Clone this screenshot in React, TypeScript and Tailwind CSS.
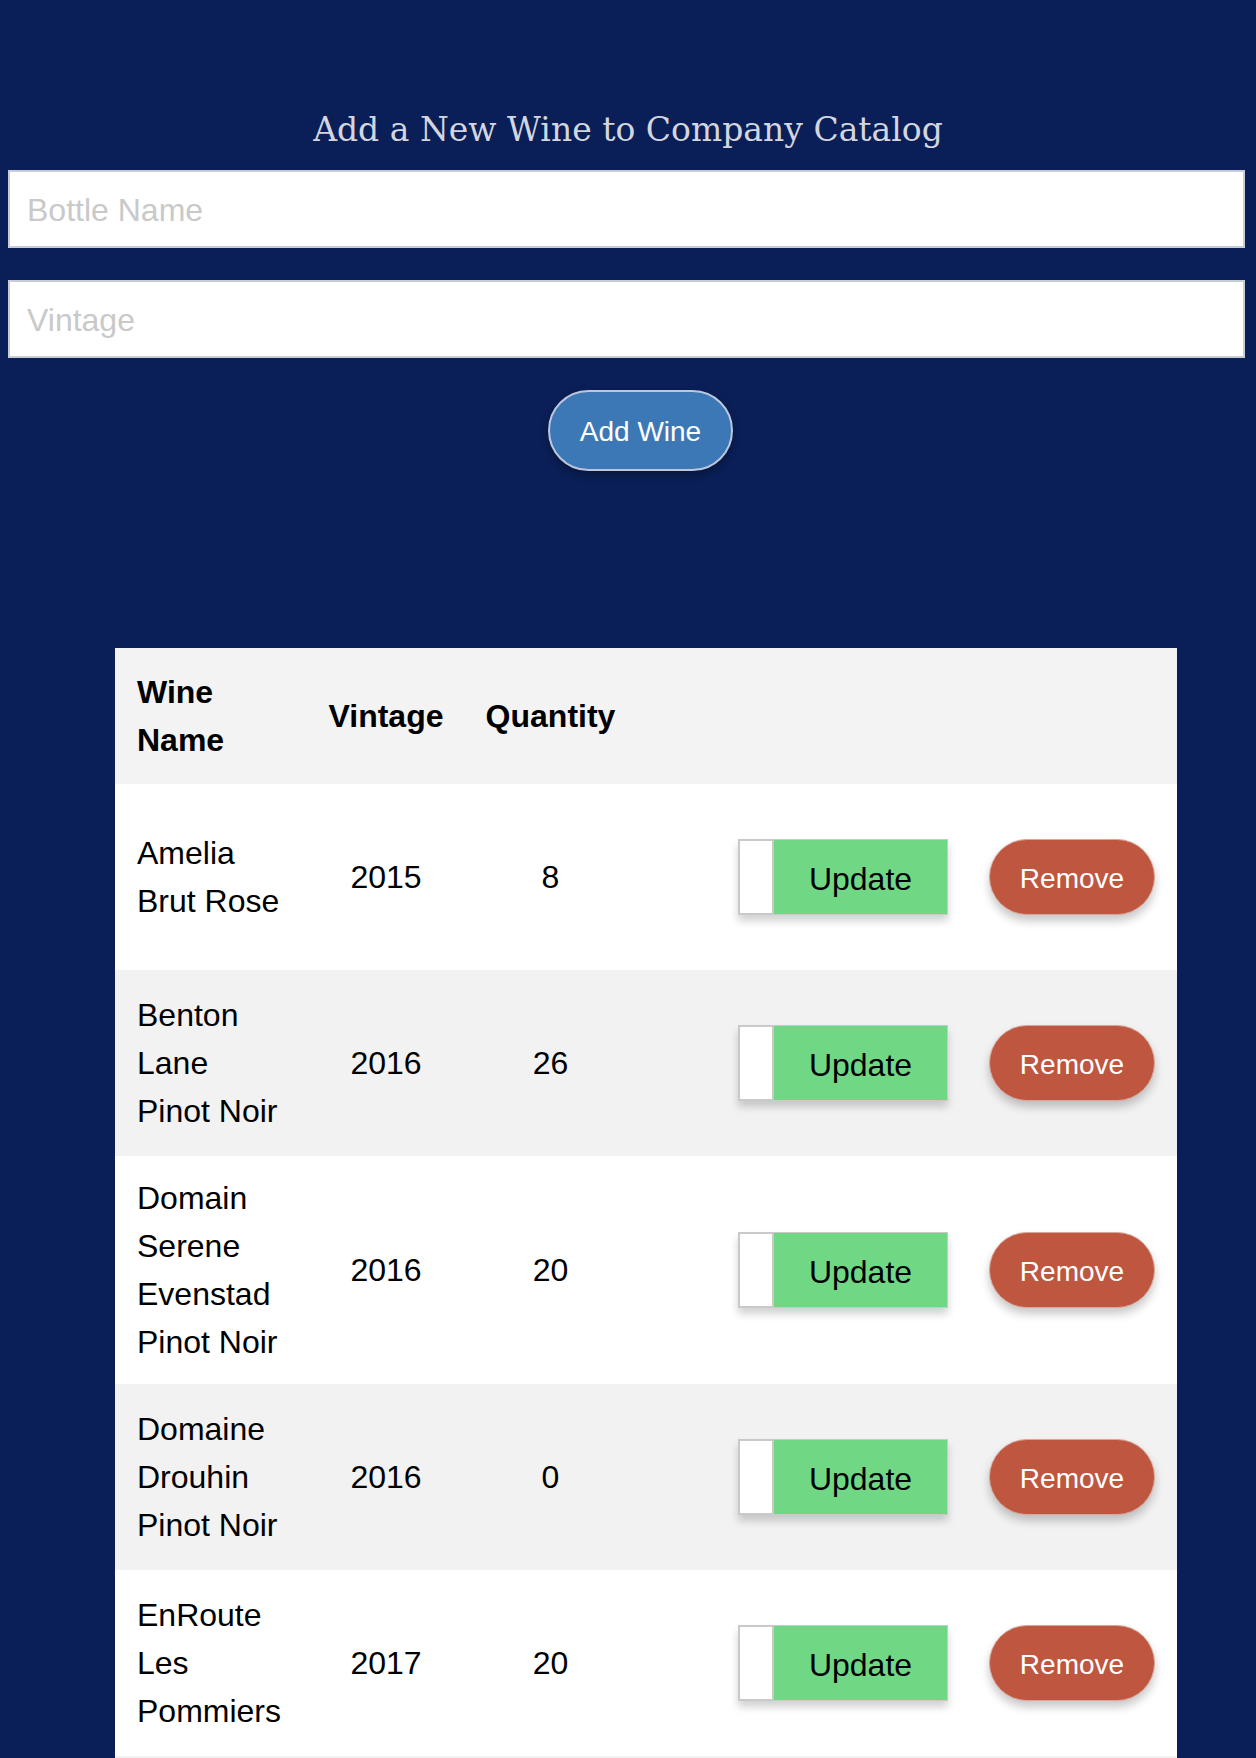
import React from "react";

type Wine = { name: string; vintage: number; qty: number };

const wines: Wine[] = [
  { name: "Amelia Brut Rose", vintage: 2015, qty: 8 },
  { name: "Benton Lane Pinot Noir", vintage: 2016, qty: 26 },
  { name: "Domain Serene Evenstad Pinot Noir", vintage: 2016, qty: 20 },
  { name: "Domaine Drouhin Pinot Noir", vintage: 2016, qty: 0 },
  { name: "EnRoute Les Pommiers", vintage: 2017, qty: 20 },
];

const Row = ({ wine, odd }: { wine: Wine; odd: boolean }) => {
  return (
    <tr className={`h-[186px] ${odd ? "bg-[#f2f2f2]" : "bg-white"}`}>
      <td className="py-[18px] pl-[22px] pr-[18px] align-middle">
        <div className="w-[150px]">{wine.name}</div>
      </td>
      <td className="py-[18px] text-center align-middle">{wine.vintage}</td>
      <td className="py-[18px] text-center align-middle">{wine.qty}</td>
      <td className="py-[18px] pr-[22px] align-middle">
        <div className="flex items-center justify-end gap-[41px]">
          <div className="flex h-[76px] shadow-[0_6px_8px_rgba(0,0,0,0.18)]">
            <span className="h-full w-[36px] border-2 border-[#c9c9c9] bg-white" />
            <button className="h-full w-[174px] border-y border-r border-[#c9c9c9] bg-[#70d884] pt-[4px] text-[32px] text-black">
              Update
            </button>
          </div>
          <button className="h-[76px] w-[166px] rounded-full border border-[#d8a79b] bg-[#be5640] pt-[3px] text-[28px] text-white shadow-[0_6px_10px_rgba(0,0,0,0.22)]">
            Remove
          </button>
        </div>
      </td>
    </tr>
  );
};

export default function App() {
  return (
    <div className="min-h-screen w-full bg-[#0a1f57] font-['Liberation_Sans',Arial,sans-serif]">
      <div className="pt-[106px]">
        <h2 className="text-center font-['DejaVu_Serif',serif] text-[33px] leading-[48px] text-[#d3d6df]">
          Add a New Wine to Company Catalog
        </h2>
        <div className="mt-[16px] ml-[8px] mr-[11px] flex flex-col gap-[32px]">
          <input
            className="h-[78px] w-full border-2 border-[#c8ccd6] bg-white px-[17px] pt-[3px] text-[32px] outline-none placeholder:text-[#c9c9c9]"
            placeholder="Bottle Name"
          />
          <input
            className="h-[78px] w-full border-2 border-[#c8ccd6] bg-white px-[17px] pt-[3px] text-[32px] outline-none placeholder:text-[#c9c9c9]"
            placeholder="Vintage"
          />
        </div>
        <div className="mt-[32px] flex justify-center pl-[25px]">
          <button className="h-[81px] w-[185px] rounded-full border-2 border-[#bcc7dd] bg-[#3d78b6] pt-[2px] text-[28px] text-white shadow-[0_4px_8px_rgba(0,0,0,0.3)]">
            Add Wine
          </button>
        </div>
      </div>

      <div className="mt-[177px] ml-[115px] w-[1062px]">
        <table className="w-full border-collapse text-[32px] leading-[48px] text-black">
          <colgroup>
            <col className="w-[191px]" />
            <col className="w-[160px]" />
            <col className="w-[169px]" />
            <col />
          </colgroup>
          <thead>
            <tr className="h-[136px] bg-[#f3f3f3] font-bold">
              <th className="py-[20px] pl-[22px] text-left align-middle">
                <div className="w-[150px]">Wine Name</div>
              </th>
              <th className="text-center align-middle">Vintage</th>
              <th className="text-center align-middle">Quantity</th>
              <th />
            </tr>
          </thead>
          <tbody>
            {wines.map((w, i) => (
              <Row key={w.name} wine={w} odd={i % 2 === 1} />
            ))}
            <tr className="h-[40px] bg-[#f2f2f2]">
              <td colSpan={4} />
            </tr>
          </tbody>
        </table>
      </div>
    </div>
  );
}
